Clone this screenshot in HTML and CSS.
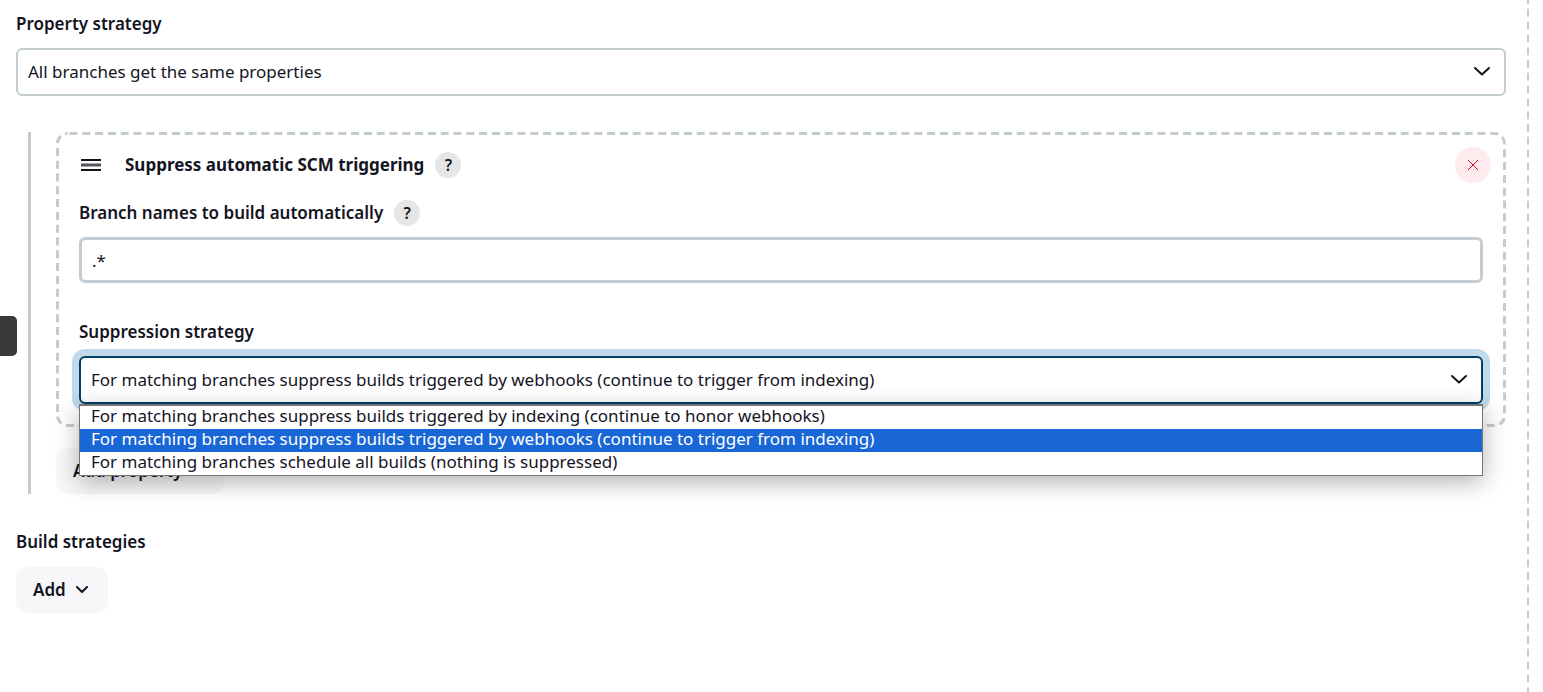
FILE: index.html
```html
<!DOCTYPE html>
<html lang="en">
<head>
  <meta charset="UTF-8">
  <meta name="viewport" content="width=device-width, initial-scale=1.0">
  <title>Branch source configuration</title>
  <link rel="stylesheet" href="styles.css">
</head>
<body>
  <button type="button" class="side-tab" aria-label="Open side panel"></button>
  <main class="source">
    <svg class="source-edge" aria-hidden="true"><line x1="1" y1="-4" x2="1" y2="100%"/></svg>

    <label class="form-label" for="strategy">Property strategy</label>
    <div class="select">
      <select id="strategy">
        <option>All branches get the same properties</option>
      </select>
      <svg viewBox="0 0 18 12" aria-hidden="true"><path d="M2 2l7 6.5L16 2"/></svg>
    </div>

    <section class="properties">
      <div class="chunk">
        <svg class="chunk-border" aria-hidden="true"><rect x="0.5" y="0.5" width="100%" height="100%" rx="10"/></svg>
        <header class="chunk-header">
          <svg class="handle" viewBox="0 0 20 12" aria-hidden="true"><path d="M0 1h20M0 11h20"/><path class="handle-middle" d="M0 6h20"/></svg>
          <h2>Suppress automatic SCM triggering</h2>
          <button type="button" class="help" aria-label="Help for suppress automatic SCM triggering">?</button>
          <button type="button" class="delete" aria-label="Delete">
            <svg viewBox="0 0 12 12" aria-hidden="true"><path d="M1 1l10 10M11 1L1 11"/></svg>
          </button>
        </header>

        <div class="label-row">
          <label class="form-label" for="branches">Branch names to build automatically</label>
          <button type="button" class="help" aria-label="Help for branch names">?</button>
        </div>
        <input type="text" id="branches" value=".*">

        <label class="form-label suppression-label" for="suppression">Suppression strategy</label>
        <div class="select open">
          <select id="suppression">
            <option>For matching branches suppress builds triggered by webhooks (continue to trigger from indexing)</option>
          </select>
          <svg viewBox="0 0 18 12" aria-hidden="true"><path d="M2 2l7 6.5L16 2"/></svg>
          <ul class="options" role="listbox">
            <li role="option">For matching branches suppress builds triggered by indexing (continue to honor webhooks)</li>
            <li role="option" aria-selected="true" class="selected">For matching branches suppress builds triggered by webhooks (continue to trigger from indexing)</li>
            <li role="option">For matching branches schedule all builds (nothing is suppressed)</li>
          </ul>
        </div>
      </div>
      <button type="button" class="add">Add property
        <svg viewBox="0 0 12 8" aria-hidden="true"><path d="M1 1l5 5 5-5"/></svg>
      </button>
    </section>

    <h3 class="form-label">Build strategies</h3>
    <button type="button" class="add">Add
      <svg viewBox="0 0 12 8" aria-hidden="true"><path d="M1 1l5 5 5-5"/></svg>
    </button>
  </main>
</body>
</html>
```
FILE: styles.css
```css
* {
  box-sizing: border-box;
}
body {
  margin: 0;
  background: #fff;
  color: #14141f;
  font-family: "Noto Sans", "Open Sans", sans-serif;
  font-size: 17px;
  line-height: 24px;
}
button, input, select {
  font: inherit;
  color: inherit;
  margin: 0;
}
button {
  border: none;
  cursor: pointer;
}
svg {
  display: block;
  fill: none;
  stroke: currentColor;
}
.source {
  position: relative;
  min-height: 100vh;
  margin-right: 14px;
  padding: 12px 23px 20px 16px;
}
.source-edge {
  position: absolute;
  top: 0;
  right: 0;
  width: 2px;
  height: 100%;
  stroke: #c3ccd1;
  stroke-width: 2;
  stroke-dasharray: 8 4.8;
}
.form-label {
  display: block;
  margin: 0;
  font-size: 17px;
  font-weight: 600;
}
.select {
  position: relative;
  margin-top: 12px;
}
.select select {
  display: block;
  width: 100%;
  height: 48px;
  padding: 0 44px 0 10px;
  appearance: none;
  background: #fff;
  border: 2px solid #c3ccd1;
  border-radius: 6px;
}
.select > svg {
  position: absolute;
  top: 18px;
  right: 15px;
  width: 18px;
  height: 12px;
  stroke-width: 2;
  stroke-linecap: round;
  stroke-linejoin: round;
  pointer-events: none;
}
.properties {
  margin: 36px 0 36px 12px;
  padding-left: 25px;
  border-left: 3px solid #c3ccd1;
}
.chunk {
  position: relative;
  padding: 15px 23px 23px;
}
.chunk-border {
  position: absolute;
  top: 1px;
  left: 1px;
  width: calc(100% - 3px);
  height: calc(100% - 3px);
  overflow: visible;
  stroke: #c3ccd1;
  stroke-width: 3;
  stroke-dasharray: 8 4.8;
  stroke-dashoffset: -2;
}
.chunk-header {
  position: relative;
  display: flex;
  align-items: center;
  margin: 0 -8px 0 2px;
  height: 36px;
}
.handle {
  width: 20px;
  height: 12px;
  margin-right: 24px;
  stroke-width: 2;
}
.handle-middle {
  stroke: #55555f;
  stroke-width: 3;
}
.chunk-header h2 {
  margin: 0;
  font-size: 17px;
  font-weight: 700;
}
.help {
  width: 26px;
  height: 26px;
  margin-left: 11px;
  padding: 0;
  border-radius: 50%;
  background: #e6e6e6;
  font-size: 16px;
  font-weight: 600;
  line-height: 26px;
}
.delete {
  display: grid;
  place-items: center;
  width: 36px;
  height: 36px;
  margin-left: auto;
  padding: 0;
  border-radius: 50%;
  background: #fdebed;
  color: #e6001f;
}
.delete svg {
  width: 12px;
  height: 12px;
}
.label-row {
  position: relative;
  display: flex;
  align-items: center;
  margin-top: 17px;
}
.chunk input {
  position: relative;
  display: block;
  width: 100%;
  height: 46px;
  margin-top: 11px;
  padding: 0 10px;
  background: #fff;
  border: 3px solid #c3ccd1;
  border-radius: 6px;
}
.suppression-label {
  margin-top: 37px;
}
.open select {
  border-color: #003f66;
  box-shadow: 0 0 0 7px #c2d9e9;
  outline: none;
}
.options {
  position: absolute;
  z-index: 1;
  top: 48px;
  left: 0;
  right: 0;
  margin: 0;
  padding: 0;
  list-style: none;
  background: #fff;
  border: 1px solid #767676;
  border-top-width: 2px;
  box-shadow: 0 6px 24px rgba(0, 0, 0, 0.3);
  color: #14141f;
}
.options li {
  height: 23px;
  padding-left: 11px;
  line-height: 20px;
  white-space: nowrap;
}
.options .selected {
  background: #1967d6;
  color: #fff;
}
.add {
  display: inline-flex;
  align-items: center;
  gap: 10px;
  height: 46px;
  padding: 0 20px 0 17px;
  border-radius: 12px;
  background: #f7f7f9;
  font-weight: 600;
}
.add svg {
  width: 12px;
  height: 8px;
  stroke-width: 2;
  stroke-linecap: round;
  stroke-linejoin: round;
}
.properties .add {
  display: flex;
  margin-top: 21px;
}
h3 + .add {
  margin-top: 13px;
}
.side-tab {
  position: absolute;
  z-index: 2;
  top: 316px;
  left: 0;
  width: 17px;
  height: 40px;
  padding: 0;
  border-radius: 0 5px 5px 0;
  background: #393939;
}
```
